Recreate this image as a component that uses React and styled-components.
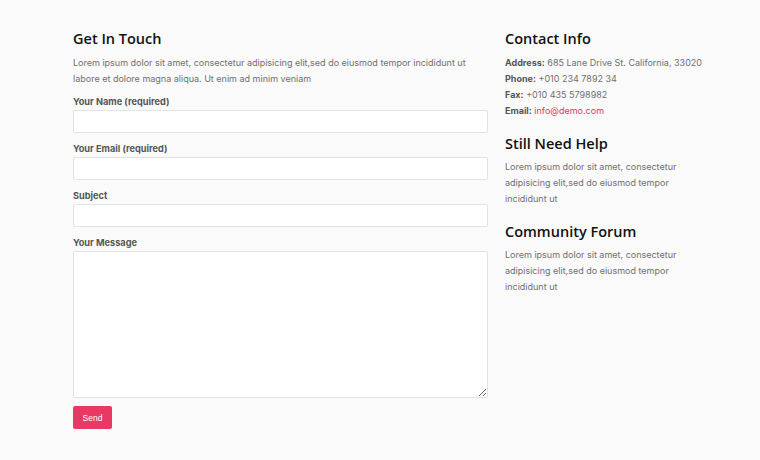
import React from 'react';
import styled, { createGlobalStyle } from 'styled-components';

const GlobalStyle = createGlobalStyle`
	html, body {
		margin: 0;
		padding: 0;
		background: #fafafa;
	}
	body {
		font-family: 'Open Sans', 'Liberation Sans', sans-serif;
	}
`;

const Page = styled.section`
	display: grid;
	grid-template-columns: 415px 210px;
	column-gap: 17px;
	padding: 30px 0 0 73px;
	min-height: 430px;
`;

const Column = styled.div`
	display: flex;
	flex-direction: column;
`;

const Heading = styled.h2`
	margin: 0 0 ${(p) => p.gap || 7}px;
	font-family: 'Open Sans', sans-serif;
	font-weight: 600;
	font-size: 14.5px;
	line-height: 18px;
	color: #111;
`;

const Text = styled.p`
	margin: 0;
	max-width: ${(p) => p.width || 'none'};
	font-family: 'Inter', sans-serif;
	font-size: 9px;
	line-height: 16px;
	color: #707070;
`;

const Form = styled.form`
	display: flex;
	flex-direction: column;
	margin-top: 9px;
`;

const Label = styled.label`
	display: block;
	font-family: 'Inter', sans-serif;
	font-weight: 700;
	font-size: 9.2px;
	line-height: 12px;
	color: #555;
	margin-bottom: 2px;
`;

const Field = styled.div`
	margin-bottom: 10px;
`;

const Input = styled.input`
	display: block;
	box-sizing: border-box;
	width: 100%;
	height: 23px;
	border: 1px solid #e3e3e3;
	border-radius: 2px;
	background: #fff;
	outline: none;
`;

const TextArea = styled.textarea`
	display: block;
	box-sizing: border-box;
	width: 100%;
	height: 147px;
	border: 1px solid #e3e3e3;
	border-radius: 2px;
	background: #fff;
	outline: none;
`;

const SendButton = styled.button`
	align-self: flex-start;
	margin-top: -2px;
	width: 39px;
	height: 23px;
	padding: 0;
	border: none;
	border-radius: 2px;
	background: #e83863;
	color: #fff;
	font-family: 'Liberation Sans', sans-serif;
	font-size: 8.5px;
`;

const InfoLine = styled.div`
	font-family: 'Inter', sans-serif;
	font-size: 9px;
	line-height: 16px;
	white-space: nowrap;
	color: #707070;
	b {
		color: #555;
		font-weight: 700;
	}
`;

const MailLink = styled.a`
	color: #e8335a;
	text-decoration: none;
`;

const Block = styled.div`
	margin-bottom: ${(p) => p.gap || 0}px;
`;

const lorem = 'Lorem ipsum dolor sit amet, consectetur adipisicing elit,sed do eiusmod tempor incididunt ut';

export default function App() {
	return (
		<>
			<GlobalStyle />
			<Page>
				<Column>
					<Heading>Get In Touch</Heading>
					<Text>
						{lorem} labore et dolore magna aliqua. Ut enim ad minim veniam
					</Text>
					<Form onSubmit={(e) => e.preventDefault()}>
						<Field>
							<Label>Your Name (required)</Label>
							<Input type='text' />
						</Field>
						<Field>
							<Label>Your Email (required)</Label>
							<Input type='email' />
						</Field>
						<Field>
							<Label>Subject</Label>
							<Input type='text' />
						</Field>
						<Field>
							<Label>Your Message</Label>
							<TextArea />
						</Field>
						<SendButton type='submit'>Send</SendButton>
					</Form>
				</Column>
				<Column>
					<Block gap={16}>
						<Heading>Contact Info</Heading>
						<InfoLine>
							<b>Address:</b> 685 Lane Drive St. California, 33020
						</InfoLine>
						<InfoLine>
							<b>Phone:</b> +010 234 7892 34
						</InfoLine>
						<InfoLine>
							<b>Fax:</b> +010 435 5798982
						</InfoLine>
						<InfoLine>
							<b>Email:</b> <MailLink href='#'>info@demo.com</MailLink>
						</InfoLine>
					</Block>
					<Block gap={16}>
						<Heading gap={6}>Still Need Help</Heading>
						<Text width='185px'>{lorem}</Text>
					</Block>
					<Block>
						<Heading gap={6}>Community Forum</Heading>
						<Text width='185px'>{lorem}</Text>
					</Block>
				</Column>
			</Page>
		</>
	);
}
